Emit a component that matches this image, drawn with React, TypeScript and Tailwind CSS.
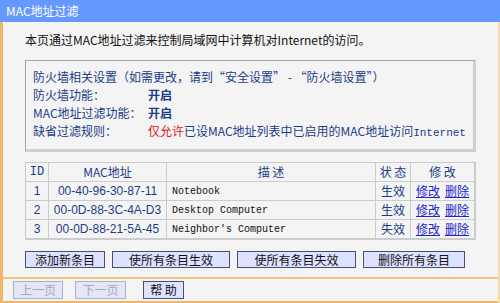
const cjk = { fontFamily: '"Noto Sans CJK SC", "Liberation Sans", sans-serif' };

interface Entry {
  id: number;
  mac: string;
  desc: string;
  status: string;
}

const entries: Entry[] = [
  { id: 1, mac: '00-40-96-30-87-11', desc: 'Notebook', status: '生效' },
  { id: 2, mac: '00-0D-88-3C-4A-D3', desc: 'Desktop Computer', status: '生效' },
  { id: 3, mac: '00-0D-88-21-5A-45', desc: "Neighbor's Computer", status: '失效' },
];

function Btn({ label, w, h, disabled }: { label: string; w: string; h: string; disabled?: boolean }) {
  return (
    <button
      className={
        'flex items-center justify-center text-[12px] leading-none border ' +
        w +
        ' ' +
        h +
        (disabled
          ? ' bg-[#e4e6f6] border-[#a8b0cc] text-[#a4a8c4]'
          : ' bg-[#dfe2ff] border-[#44507c] text-[#111]')
      }
      style={cjk}
    >
      {label}
    </button>
  );
}

export default function App() {
  return (
    <div className="w-[500px] h-[303px] bg-[#f4f4f4] overflow-hidden flex flex-col" style={cjk}>
      <div className="h-[22px] bg-[#6699ff] text-white text-[12px] leading-[22px] pl-[6px] shrink-0">
        MAC地址过滤
      </div>

      <div className="flex-1 flex border-l-[3px] border-l-[#f2b466] border-r-[2px] border-r-[#f6d9a8]">
        <div className="flex-1 flex flex-col">
          <div className="h-[255px] pl-[22px] pt-[10px]">
            <p className="text-[12px] leading-[16px] text-[#111]">
              本页通过MAC地址过滤来控制局域网中计算机对Internet的访问。
            </p>

            <div className="mt-[12px] w-[451px] h-[92px] border-t border-l border-[#a6a6a6] border-r-[3px] border-b-[3px] border-r-[#cfcfcf] border-b-[#cfcfcf] pl-[7px] pt-[7px] text-[12px] text-[#1c3c88]">
              <div className="h-[18px] leading-[18px]">
                防火墙相关设置（如需更改，请到“安全设置” - “防火墙设置”）
              </div>
              <div className="h-[18px] leading-[18px] flex">
                <span className="w-[115px]">防火墙功能：</span>
                <span className="font-bold">开启</span>
              </div>
              <div className="h-[18px] leading-[18px] flex">
                <span className="w-[115px]">MAC地址过滤功能：</span>
                <span className="font-bold">开启</span>
              </div>
              <div className="h-[18px] leading-[18px] flex">
                <span className="w-[115px]">缺省过滤规则：</span>
                <span>
                  <span className="text-[#e01818]">仅允许</span>已设MAC地址列表中已启用的MAC地址访问
                  <span className="text-[11px]" style={{ fontFamily: '"Liberation Mono", monospace' }}>
                    Internet
                  </span>
                </span>
              </div>
            </div>

            <table className="mt-[10px] w-[451px] border-collapse text-[12px] text-[#1c3c88] border-r-2 border-b-2 border-[#cccccc]">
              <thead>
                <tr className="h-[19px]">
                  <th className="w-[23px] border border-[#cccccc] font-normal" style={{ fontFamily: '"Liberation Mono", monospace' }}>
                    ID
                  </th>
                  <th className="w-[118px] border border-[#cccccc] font-normal">MAC地址</th>
                  <th className="w-[209px] border border-[#cccccc] font-normal">描 述</th>
                  <th className="w-[35px] border border-[#cccccc] font-normal">状 态</th>
                  <th className="border border-[#cccccc] font-normal">修 改</th>
                </tr>
              </thead>
              <tbody>
                {entries.map((e) => (
                  <tr key={e.id} className="h-[19px]">
                    <td className="border border-[#cccccc] text-center" style={{ fontFamily: '"Liberation Sans", sans-serif' }}>
                      {e.id}
                    </td>
                    <td className="border border-[#cccccc] text-center" style={{ fontFamily: '"Liberation Sans", sans-serif' }}>
                      {e.mac}
                    </td>
                    <td
                      className="border border-[#cccccc] pl-[5px] text-[10px] text-[#111]"
                      style={{ fontFamily: '"Liberation Mono", monospace' }}
                    >
                      {e.desc}
                    </td>
                    <td className="border border-[#cccccc] text-center">{e.status}</td>
                    <td className="border border-[#cccccc] text-center">
                      <a className="text-[#2222cc] underline">修改</a>
                      <a className="text-[#2222cc] underline ml-[5px]">删除</a>
                    </td>
                  </tr>
                ))}
              </tbody>
            </table>

            <div className="mt-[11px] flex gap-[7px]">
              <Btn label="添加新条目" w="w-[80px]" h="h-[17px]" />
              <Btn label="使所有条目生效" w="w-[118px]" h="h-[17px]" />
              <Btn label="使所有条目失效" w="w-[119px]" h="h-[17px]" />
              <Btn label="删除所有条目" w="w-[102px]" h="h-[17px]" />
            </div>
          </div>

          <div className="flex-1 border-t-2 border-[#f4c27e] border-b-2 border-b-[#f2b466] flex items-center gap-[12px] pl-[10px]">
            <Btn label="上一页" w="w-[50px]" h="h-[18px]" disabled />
            <Btn label="下一页" w="w-[51px]" h="h-[18px]" disabled />
            <div className="ml-[5px]">
              <Btn label="帮 助" w="w-[41px]" h="h-[18px]" />
            </div>
          </div>
        </div>
      </div>
    </div>
  );
}
